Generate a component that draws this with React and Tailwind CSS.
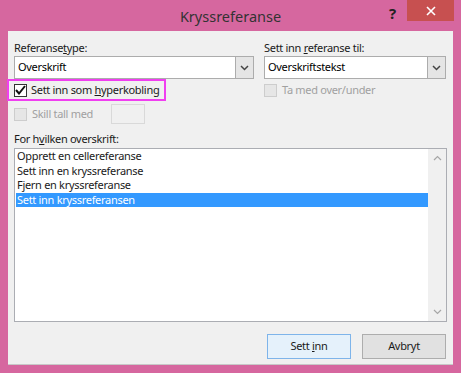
import React from "react";

const font = { fontFamily: '"Segoe UI", "Noto Sans", "Open Sans", sans-serif' };

const ITEMS = [
  "Opprett en cellereferanse",
  "Sett inn en kryssreferanse",
  "Fjern en kryssreferanse",
  "Sett inn kryssreferansen",
];

function Chevron({ up = false, color = "#444", sw = 1.5 }) {
  return (
    <svg width="9" height="6" viewBox="0 0 9 6" className={up ? "rotate-180" : ""}>
      <path d="M1 1 L4.5 4.5 L8 1" fill="none" stroke={color} strokeWidth={sw} />
    </svg>
  );
}

function Combo({ value, width }) {
  return (
    <div className={`flex h-[23px] ${width} border border-[#acacac] bg-white`}>
      <div className="flex-1 flex items-center pl-[3px] text-black">{value}</div>
      <div className="w-[18px] flex items-center justify-center bg-[#e5e5e5] border-l border-[#acacac]">
        <Chevron />
      </div>
    </div>
  );
}

function DisabledBox() {
  return <div className="w-[13px] h-[13px] shrink-0 border border-[#cdcdcd] bg-[#e6e6e6]" />;
}

export default function App() {
  return (
    <div style={font} className="w-[461px] h-[373px] bg-[#d6679f] flex flex-col">
      {/* title bar */}
      <div className="h-[31px] flex relative">
        <div className="flex-1 flex items-center justify-center pt-[2px] text-[14.5px] text-[#333]">
          Kryssreferanse
        </div>
        <div className="absolute left-[389px] top-[2px] text-[15px] font-bold text-[#222]">?</div>
        <div className="absolute left-[407px] top-0 w-[47px] h-[21px] bg-[#c75050] flex items-center justify-center">
          <svg width="10" height="10" viewBox="0 0 10 10">
            <path d="M1 1 L9 9 M9 1 L1 9" stroke="white" strokeWidth="1.6" />
          </svg>
        </div>
      </div>

      {/* panel */}
      <div className="mx-[8px] mb-[8px] flex-1 bg-[#f0f0f0] border-b border-[#c8c8c8] pl-[6px] pt-[8px] flex flex-col text-[11px] tracking-[-0.3px] text-[#1a1a1a] whitespace-nowrap">
        <div className="flex">
          <div className="w-[240px] flex flex-col">
            <div className="h-[17px] leading-[17px]">
              Referanse<span className="underline">t</span>ype:
            </div>
            <Combo value="Overskrift" width="w-[240px]" />
            <div className="-ml-[7px] w-[159px] h-[22px] border-2 border-[#f03ff0] flex items-center pl-[5px] gap-[4px]">
              <div className="w-[13px] h-[13px] shrink-0 border border-[#333] bg-white flex items-center justify-center">
                <svg width="11" height="10" viewBox="0 0 11 10">
                  <path d="M1 5 L4 8.5 L10 1" fill="none" stroke="#111" strokeWidth="2" />
                </svg>
              </div>
              <span>
                Sett inn som <span className="underline">h</span>yperkobling
              </span>
            </div>
            <div className="flex items-center mt-[3px] h-[20px]">
              <DisabledBox />
              <span className="ml-[5px] text-[#a0a0a0]">Skill tall med</span>
              <div className="ml-[18px] w-[34px] h-[20px] border border-[#d9d9d9] bg-[#f0f0f0]" />
            </div>
          </div>
          <div className="ml-[10px] w-[182px] flex flex-col">
            <div className="h-[17px] leading-[17px]">
              Sett inn <span className="underline">r</span>eferanse til:
            </div>
            <Combo value="Overskriftstekst" width="w-[182px]" />
            <div className="flex items-center h-[22px]">
              <DisabledBox />
              <span className="ml-[5px] text-[#a0a0a0]">Ta med over/under</span>
            </div>
          </div>
        </div>

        <div className="mt-[7px] h-[16px] leading-[16px]">
          For h<span className="underline">v</span>ilken overskrift:
        </div>
        <div className="mt-[1px] w-[433px] h-[174px] border border-[#abadb3] bg-white flex">
          <div className="flex-1 flex flex-col pl-[1px]">
            {ITEMS.map((t, i) => (
              <div
                key={t}
                className={`h-[14.5px] leading-[14.5px] pl-[1px] ${
                  i === 3 ? "bg-[#3399ff] text-white" : "text-[#1a1a1a]"
                }`}
              >
                {t}
              </div>
            ))}
          </div>
          <div className="w-[18px] bg-[#f0f0f0] flex flex-col items-center justify-between py-[6px]">
            <Chevron up color="#a6a6a6" sw={1.2} />
            <Chevron color="#a6a6a6" sw={1.2} />
          </div>
        </div>

        <div className="mt-[12px] flex justify-end pr-[7px] gap-[11px]">
          <div className="w-[84px] h-[25px] border border-[#7eb4ea] bg-[#e5f1fb] flex items-center justify-center">
            <span>
              Sett <span className="underline">i</span>nn
            </span>
          </div>
          <div className="w-[84px] h-[25px] border border-[#adadad] bg-[#e1e1e1] flex items-center justify-center">
            Avbryt
          </div>
        </div>
      </div>
    </div>
  );
}
